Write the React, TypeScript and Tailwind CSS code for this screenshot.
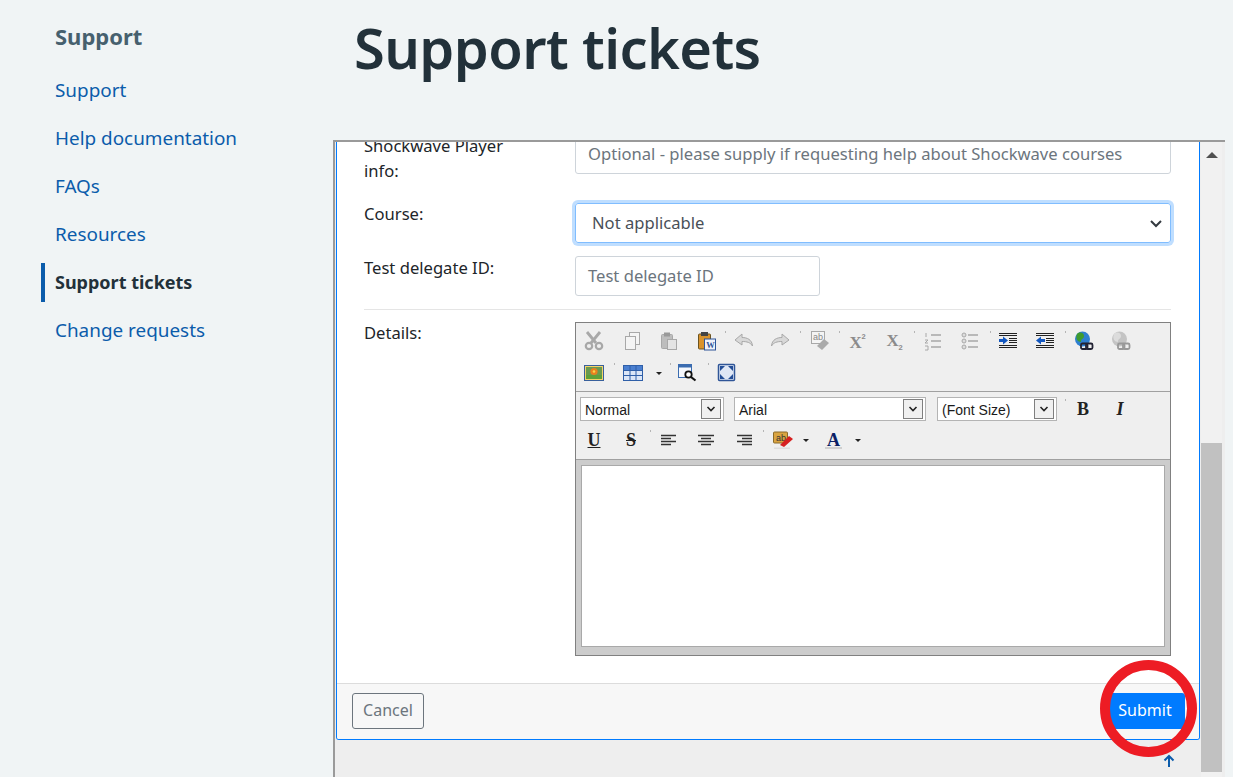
import React from "react";

function Svg({ children }: { children: React.ReactNode }) {
  return <svg width="20" height="20" viewBox="0 0 20 20" className="block">{children}</svg>;
}

const G = "#a8a8a8";
const serif = "block text-[18px] leading-5 font-bold text-center text-[#222] [font-family:'Liberation_Serif',serif]";
const icons: Record<string, React.ReactNode> = {
  cut: <Svg><path d="M3 1l9 11M16 1L7 12" stroke={G} strokeWidth="2.800" fill="none" /><circle cx="5" cy="15" r="3.200" fill="none" stroke={G} strokeWidth="2.200" /><circle cx="15" cy="15" r="3.200" fill="none" stroke={G} strokeWidth="2.200" /></Svg>,
  copy: <Svg><rect x="7.500" y="1.500" width="10" height="12" fill="#f4f4f4" stroke={G} /><rect x="3.500" y="5.500" width="10" height="13" fill="#f4f4f4" stroke={G} /></Svg>,
  paste: <Svg><rect x="2.500" y="3.500" width="11" height="14" rx="1" fill="#bdbdbd" stroke={G} /><rect x="5" y="1.500" width="6" height="4" fill="#999" /><rect x="8.500" y="8.500" width="9" height="10" fill="#e4e4e4" stroke={G} /></Svg>,
  word: <Svg><rect x="1.500" y="3" width="12" height="15" rx="1" fill="#d9932c" stroke="#6b5320" /><rect x="4" y="1" width="7" height="4" fill="#444" /><rect x="7.500" y="8" width="11" height="11" fill="#eef2fa" stroke="#2f5597" /><text x="9.300" y="17" fontSize="8.500" fontWeight="700" fontFamily="Liberation Serif" fill="#2f5597">W</text></Svg>,
  undo: <Svg><path d="M1 9l7-6v3.500c5 0 10 2 10.500 8.500-2-3.500-5.500-4.500-10.500-4.500V14z" fill="#d8d8d8" stroke={G} /></Svg>,
  redo: <Svg><path d="M19 9l-7-6v3.500c-5 0-10 2-10.500 8.500 2-3.500 5.500-4.500 10.500-4.500V14z" fill="#d8d8d8" stroke={G} /></Svg>,
  spell: <Svg><rect x="1.500" y="0.500" width="13" height="12" fill="#f4f4f4" stroke={G} /><text x="3" y="9" fontSize="9" fontFamily="Liberation Sans" fill="#888">ab</text><path d="M7 15l7-7 5 4-7 7z" fill="#aaa" /></Svg>,
  sup: <Svg><text x="1.500" y="17" fontSize="17" fontWeight="700" fontFamily="Liberation Serif" fill="#8b8b8b">X</text><text x="13.500" y="8" fontSize="7.500" fontWeight="700" fontFamily="Liberation Sans" fill="#8b8b8b">2</text></Svg>,
  sub: <Svg><text x="1.500" y="15" fontSize="17" fontWeight="700" fontFamily="Liberation Serif" fill="#8b8b8b">X</text><text x="13.500" y="19" fontSize="7.500" fontWeight="700" fontFamily="Liberation Sans" fill="#8b8b8b">2</text></Svg>,
  ol: <Svg><path d="M8 4h10M8 10h10M8 16h10" stroke={G} strokeWidth="1.400" /><path d="M3 2v4M2 9h3l-3 3h3M2 15h3v4H2" stroke={G} fill="none" /></Svg>,
  ul: <Svg><path d="M8 4h10M8 10h10M8 16h10" stroke={G} strokeWidth="1.400" /><circle cx="4" cy="4" r="2" fill="#ddd" stroke={G} /><circle cx="4" cy="10" r="2" fill="#ddd" stroke={G} /><circle cx="4" cy="16" r="2" fill="#ddd" stroke={G} /></Svg>,
  indent: <Svg><path d="M1 2.500h18M1 4.500h18M11 7.500h8M11 9.500h8M11 11.500h8M1 14.500h18M1 16.500h18" stroke="#222" strokeWidth="1" /><path d="M1 8h4V5.500L10 9.500l-5 4V11H1z" fill="#1257c0" /></Svg>,
  outdent: <Svg><path d="M1 2.500h18M1 4.500h18M11 7.500h8M11 9.500h8M11 11.500h8M1 14.500h18M1 16.500h18" stroke="#222" strokeWidth="1" /><path d="M10 8H6V5.500l-5 4 5 4V11h4z" fill="#1257c0" /></Svg>,
  link: <Svg><circle cx="8.500" cy="8" r="7.500" fill="#2e7fd0" /><path d="M3 3c3-3 7-1 7 2s-3 2-3 6c-3 0-6-3-4-8z" fill="#3f9b2f" /><rect x="7" y="12.500" width="6.500" height="5.500" rx="1.500" fill="none" stroke="#223" strokeWidth="1.800" /><rect x="12" y="12.500" width="6.500" height="5.500" rx="1.500" fill="none" stroke="#223" strokeWidth="1.800" /></Svg>,
  unlink: <Svg><circle cx="8.500" cy="8" r="7.500" fill="#c4c4c4" /><path d="M3 3c3-3 7-1 7 2s-3 2-3 6c-3 0-6-3-4-8z" fill="#dcdcdc" /><rect x="7" y="12.500" width="6.500" height="5.500" rx="1.500" fill="none" stroke="#999" strokeWidth="1.800" /><rect x="12" y="12.500" width="6.500" height="5.500" rx="1.500" fill="none" stroke="#999" strokeWidth="1.800" /></Svg>,
  image: <Svg><rect x="0.500" y="2.500" width="19" height="15" fill="#f3d36a" stroke="#39609c" /><rect x="2" y="4" width="16" height="8" fill="#6a9a50" /><rect x="2" y="12" width="16" height="4" fill="#5da03a" /><circle cx="10" cy="8.500" r="3.600" fill="#e8801f" /><circle cx="10" cy="8.500" r="1.300" fill="#f8d24a" /></Svg>,
  table: <Svg><rect x="0.500" y="2.500" width="19" height="15" fill="#dbe6f7" stroke="#2f5fa8" /><rect x="1" y="3" width="18" height="4" fill="#4a7fd0" /><path d="M7 3v14M13 3v14M1 7.500h18M1 12.500h18" stroke="#2f5fa8" /></Svg>,
  find: <Svg><rect x="1.500" y="1.500" width="13" height="13" fill="#f5f8fd" stroke="#3b6cb0" /><rect x="2" y="2" width="12" height="2.500" fill="#3b6cb0" /><circle cx="11.500" cy="11.500" r="3.200" fill="#fff" stroke="#111" strokeWidth="1.800" /><path d="M14 14l4.500 3.500" stroke="#111" strokeWidth="2.200" /></Svg>,
  max: <Svg><rect x="1.500" y="1.500" width="16" height="16" rx="1" fill="#dfe7f5" stroke="#2f5597" strokeWidth="1.500" /><path d="M3 3h5l-5 5zM16 3h-5l5 5zM3 16h5l-5-5zM16 16h-5l5-5z" fill="#234d96" /></Svg>,
  b: <span className={serif}>B</span>,
  i: <span className={serif + " italic"}>I</span>,
  u: <span className={serif + " underline"}>U</span>,
  s: <span className={serif + " line-through"}>S</span>,
  left: <Svg><path d="M2 5h15M2 8h10M2 11h15M2 14h10" stroke="#333" strokeWidth="1.500" transform="translate(0 .5)" /></Svg>,
  center: <Svg><path d="M2 5h16M5 8h10M2 11h16M5 14h10" stroke="#333" strokeWidth="1.500" transform="translate(0 .5)" /></Svg>,
  right: <Svg><path d="M3 5h15M8 8h10M3 11h15M8 14h10" stroke="#333" strokeWidth="1.500" transform="translate(0 .5)" /></Svg>,
  hilite: <Svg><rect x="0.500" y="2" width="14" height="11" rx="1" fill="#d9a441" stroke="#8a6a2a" /><text x="3" y="10.500" fontSize="9" fontFamily="Liberation Sans" fill="#333">ab</text><path d="M7 15l9-9 4 3-9 8z" fill="#d62020" /><rect x="1" y="17.500" width="16" height="1.500" fill="#ddd" /></Svg>,
  color: <Svg><text x="3" y="16" fontSize="18" fontWeight="700" fontFamily="Liberation Serif" fill="#0b1f66">A</text><rect x="1" y="17" width="17" height="2" fill="#cfcfcf" /></Svg>,
};

function Btn({ n, className = "" }: { n: string; className?: string }) {
  return <div className={"w-6 h-6 flex items-center justify-center shrink-0 " + className}><div className="w-5">{icons[n]}</div></div>;
}
function Sep({ className = "" }: { className?: string }) {
  return <div className={"w-px h-[2px] bg-[#b5b5b5] self-start mt-[2px] shrink-0 " + className} />;
}
function Caret({ className = "" }: { className?: string }) {
  return <div className={"w-0 h-0 border-x-[3px] border-x-transparent border-t-[3px] border-t-[#222] shrink-0 " + className} />;
}
function Combo({ label, className }: { label: string; className: string }) {
  return (
    <div className={"h-6 border border-[#b4b4b4] bg-white flex items-center justify-between pl-[4px] pr-[2px] shrink-0 " + className}>
      <span className="pt-[2px] text-[14px] text-[#1a1a1a] [font-family:'Liberation_Sans',sans-serif]">{label}</span>
      <div className="w-5 h-5 border border-[#7f7f7f] bg-[#f0f0f0] flex items-center justify-center">
        <svg width="10" height="8" viewBox="0 0 10 8"><path d="M1.500 2l3.500 3.500L8.500 2" fill="none" stroke="#222" strokeWidth="1.600" /></svg>
      </div>
    </div>
  );
}

function Editor() {
  return (
    <div className="w-[596px] border border-[#808080] bg-[#efefef]">
      <div className="h-[69px] border-b border-[#a0a0a0] pl-[6px] pt-[6px]">
        <div className="flex items-center h-6">
          <Btn n="cut" />
          <Btn n="copy" className="ml-[14px]" />
          <Btn n="paste" className="ml-[13px]" />
          <Btn n="word" className="ml-[14px]" />
          <Sep className="ml-[6px]" />
          <Btn n="undo" className="ml-[6px]" />
          <Btn n="redo" className="ml-[12px]" />
          <Sep className="ml-[8px]" />
          <Btn n="spell" className="ml-[7px]" />
          <Sep className="ml-[7px]" />
          <Btn n="sup" className="ml-[6px]" />
          <Btn n="sub" className="ml-[13px]" />
          <Sep className="ml-[7px]" />
          <Btn n="ol" className="ml-[6px]" />
          <Btn n="ul" className="ml-[13px]" />
          <Sep className="ml-[8px]" />
          <Btn n="indent" className="ml-[5px]" />
          <Btn n="outdent" className="ml-[13px]" />
          <Sep className="ml-[8px]" />
          <Btn n="link" className="ml-[6px]" />
          <Btn n="unlink" className="ml-[13px]" />
        </div>
        <div className="flex items-center h-6 mt-[8px]">
          <Btn n="image" />
          <Sep className="ml-[8px]" />
          <Btn n="table" className="ml-[6px]" />
          <Caret className="ml-[11px]" />
          <Sep className="ml-[8px]" />
          <Btn n="find" className="ml-[4px]" />
          <Sep className="ml-[9px]" />
          <Btn n="max" className="ml-[6px]" />
        </div>
      </div>
      <div className="h-[68px] border-b border-[#a0a0a0] pl-[4px] pt-[5px]">
        <div className="flex items-center h-6">
          <Combo label="Normal" className="w-[144px]" />
          <Combo label="Arial" className="w-[192px] ml-[10px]" />
          <Combo label="(Font Size)" className="w-[120px] ml-[11px]" />
          <Sep className="ml-[8px]" />
          <Btn n="b" className="ml-[5px]" />
          <Btn n="i" className="ml-[13px]" />
        </div>
        <div className="flex items-center h-6 mt-[7px]">
          <Btn n="u" className="ml-[2px]" />
          <Btn n="s" className="ml-[13px]" />
          <Sep className="ml-[7px]" />
          <Btn n="left" className="ml-[6px]" />
          <Btn n="center" className="ml-[13px]" />
          <Btn n="right" className="ml-[14px]" />
          <Sep className="ml-[7px]" />
          <Btn n="hilite" className="ml-[7px]" />
          <Caret className="ml-[8px]" />
          <Btn n="color" className="ml-[13px]" />
          <Caret className="ml-[9px]" />
        </div>
      </div>
      <div className="bg-[#cccccc] p-[5px] pb-[8px] h-[195px]">
        <div className="h-[182px] bg-white border border-[#a9a9a9]" />
      </div>
    </div>
  );
}

function SideLink({ children, active }: { children: React.ReactNode; active?: boolean }) {
  return (
    <div className={active
      ? "h-[39px] mt-[9px] ml-[41px] pl-[10px] border-l-4 border-[#0b5cab] flex items-center font-bold text-[18px] text-[#22313a]"
      : "h-[39px] mt-[9px] ml-[55px] flex items-center text-[#0b5cab]"}>{children}</div>
  );
}

export default function App() {
  return (
    <div className="relative h-[777px] overflow-hidden bg-[#f0f4f5] flex text-[18.900px] [font-family:'Noto_Sans','Open_Sans',sans-serif]">
      <aside className="w-[333px] shrink-0 pt-[21px]">
        <div className="ml-[55px] h-[30px] leading-[30px] text-[22px] font-bold text-[#46606e]">Support</div>
        <div className="mt-[20px]">
          <SideLink>Support</SideLink>
          <SideLink>Help documentation</SideLink>
          <SideLink>FAQs</SideLink>
          <SideLink>Resources</SideLink>
          <SideLink active>Support tickets</SideLink>
          <SideLink>Change requests</SideLink>
        </div>
      </aside>
      <main className="w-[892px] shrink-0">
        <h1 className="h-[140px] pl-[21px] pt-[7px] text-[56px] leading-[80px] tracking-[-0.6px] font-semibold text-[#22313a]">Support tickets</h1>
        <div className="h-[637px] border-t-2 border-l-2 border-[#9a9a9a] bg-[#eeeeee] flex overflow-hidden">
          <div className="ml-px w-[864px] h-[598px] shrink-0 border-x border-b border-x-[#007bff] border-b-[#007bff] rounded-b-[3px] bg-white flex flex-col overflow-hidden text-[16.600px] text-[#212529]">
            <div className="flex-1 pl-[27px] pr-[28px]">
              <div className="flex -mt-[8px] h-[48px]">
                <div className="w-[211px] pr-[50px] leading-[25px] -mt-[1px]">Shockwave Player info:</div>
                <div className="w-[596px] h-[40px] border border-[#ced4da] rounded-[3px] bg-white px-3 pt-[1px] flex items-center text-[#6c757d]">Optional - please supply if requesting help about Shockwave courses</div>
              </div>
              <div className="flex mt-[21px] h-[40px]">
                <div className="w-[211px] leading-[22px]">Course:</div>
                <div className="w-[596px] h-[40px] border border-[#80bdff] rounded-[3px] shadow-[0_0_0_3px_rgba(0,123,255,0.25)] pl-4 pr-[7px] flex items-center justify-between">
                  <span className="text-[#495057]">Not applicable</span>
                  <svg width="14" height="10" viewBox="0 0 14 10"><path d="M2 3l5 5 5-5" fill="none" stroke="#343a40" strokeWidth="2" /></svg>
                </div>
              </div>
              <div className="flex mt-[13px] h-[40px]">
                <div className="w-[211px] leading-[24px]">Test delegate ID:</div>
                <div className="w-[245px] h-[40px] border border-[#ced4da] rounded-[3px] px-3 flex items-center text-[#6c757d]">Test delegate ID</div>
              </div>
              <div className="border-t border-[#e5e5e5] mt-[13px]" />
              <div className="flex mt-[12px]">
                <div className="w-[211px] leading-[24px] mt-[-1px]">Details:</div>
                <Editor />
              </div>
            </div>
            <div className="h-[56px] border-t border-[#dcdcdc] bg-[#f7f7f7] flex items-start justify-between pt-[9px] pl-[15px] pr-[14px] text-[16px]">
              <div className="w-[72px] h-[36px] pb-[2px] border border-[#6c757d] rounded-[3px] flex items-center justify-center text-[#6c757d]">Cancel</div>
              <div className="w-[80px] h-[36px] pb-[2px] bg-[#007bff] rounded-[3px] flex items-center justify-center text-white">Submit</div>
            </div>
          </div>
          <div className="ml-px w-[21px] h-[635px] bg-[#f1f1f1] flex flex-col shrink-0">
            <div className="h-[300px] pt-[10px] flex justify-center">
              <div className="w-0 h-0 border-x-[6px] border-x-transparent border-b-[6px] border-b-[#505050]" />
            </div>
            <div className="mt-[1px] h-[329px] bg-[#c1c1c1]" />
          </div>
        </div>
      </main>
      <svg width="14" height="14" viewBox="0 0 14 14" className="absolute left-[1162px] top-[754px]"><path d="M7 13V2M2.500 6.500L7 2l4.500 4.500" fill="none" stroke="#0b5cab" strokeWidth="2" /></svg>
      <div className="absolute left-[1100px] top-[660px] w-[97px] h-[97px] rounded-full border-[10px] border-[#ed1c24]" />
    </div>
  );
}
